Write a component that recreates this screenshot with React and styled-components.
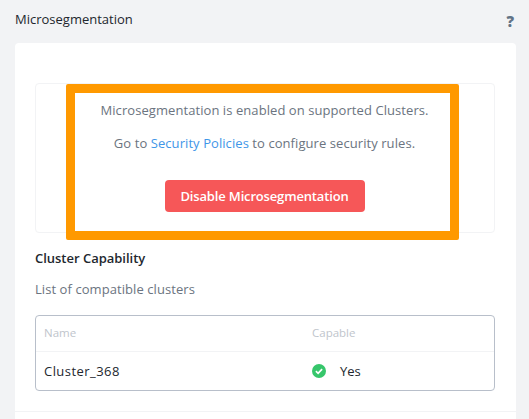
import React from "react"
import styled, { createGlobalStyle } from "styled-components"

const GlobalStyle = createGlobalStyle`
  html, body {
    margin: 0;
    padding: 0;
    background: #f2f3f5;
    font-family: "Open Sans", "Liberation Sans", sans-serif;
    overflow: hidden;
  }
`;

function CheckIcon() {
  return (
    <svg width="14" height="14" viewBox="0 0 14 14">
      <circle cx="7" cy="7" r="7" fill="#36c66b" />
      <path d="M3.9 7.2 L6.1 9.3 L10.1 5.1" fill="none" stroke="#fff" strokeWidth="1.7" />
    </svg>
  );
}

function App() {
  return (
    <Page>
      <GlobalStyle />
      <TopBar>
        <Title>Microsegmentation</Title>
        <Help>?</Help>
      </TopBar>

      <Card>
        <StatusBox>
          <StatusText>Microsegmentation is enabled on supported Clusters.</StatusText>
          <StatusText>
            Go to <SecurityLink href="#">Security Policies</SecurityLink> to configure security rules.
          </StatusText>
          <DangerButton>Disable Microsegmentation</DangerButton>
          <Highlight />
        </StatusBox>

        <SectionTitle>Cluster Capability</SectionTitle>
        <SectionHint>List of compatible clusters</SectionHint>

        <Table>
          <HeadRow>
            <span>Name</span>
            <span>Capable</span>
          </HeadRow>
          <BodyRow>
            <ClusterName>Cluster_368</ClusterName>
            <CapableCell>
              <CheckIcon />
              <span>Yes</span>
            </CapableCell>
          </BodyRow>
        </Table>

        <Divider />
      </Card>
    </Page>
  );
}

export default App;

const Page = styled.div`
  width: 529px;
  height: 419px;
  overflow: hidden;
  display: flex;
  flex-direction: column;
  padding: 0 13px 0 15px;
  box-sizing: border-box;
`;

const TopBar = styled.div`
  height: 43px;
  display: flex;
  justify-content: space-between;
  flex-shrink: 0;
`;

const Title = styled.div`
  margin-top: 10px;
  font-size: 13px;
  line-height: 18px;
  color: #22272e;
`;

const Help = styled.div`
  margin: 12px 2px 0 0;
  font-size: 15px;
  line-height: 18px;
  font-weight: 800;
  color: #627386;
`;

const Card = styled.div`
  flex: 1;
  background: #fff;
  border-radius: 4px 4px 0 0;
  padding: 40px 21px 0 20px;
`;

const StatusBox = styled.div`
  position: relative;
  height: 150px;
  box-sizing: border-box;
  border: 1px solid #f2f3f5;
  border-radius: 4px;
  display: flex;
  flex-direction: column;
  align-items: center;
  padding: 17px 1px 0 0;
`;

const StatusText = styled.p`
  margin: 0 0 15px;
  font-size: 13px;
  line-height: 18px;
  letter-spacing: 0.07px;
  color: #6b7480;
`;

const SecurityLink = styled.a`
  color: #3f96e8;
  text-decoration: none;
`;

const DangerButton = styled.button`
  margin-top: 13px;
  width: 200px;
  height: 32px;
  border: none;
  border-radius: 4px;
  background: #f65758;
  color: #fff;
  font-family: inherit;
  font-size: 13px;
  font-weight: 600;
  letter-spacing: -0.16px;
`;

const Highlight = styled.div`
  position: absolute;
  left: 30px;
  top: 0;
  width: 393px;
  height: 156px;
  box-sizing: border-box;
  border: 9px solid #ff9900;
  border-radius: 2px;
`;

const SectionTitle = styled.div`
  margin-top: 16px;
  font-size: 13px;
  line-height: 18px;
  font-weight: 600;
  letter-spacing: -0.02px;
  color: #22272e;
`;

const SectionHint = styled.div`
  margin-top: 13px;
  font-size: 13px;
  line-height: 18px;
  letter-spacing: 0.07px;
  color: #6b7480;
`;

const Table = styled.div`
  margin-top: 17px;
  box-sizing: border-box;
  height: 76px;
  border: 1px solid #b8bfca;
  border-radius: 4px;
`;

const HeadRow = styled.div`
  height: 36px;
  box-sizing: border-box;
  display: grid;
  grid-template-columns: 268px 1fr;
  align-items: center;
  padding: 0 8px 2px;
  border-bottom: 1px solid #f2f3f5;
  font-size: 11.5px;
  color: #c0c5cc;
`;

const BodyRow = styled.div`
  height: 38px;
  display: grid;
  grid-template-columns: 268px 1fr;
  align-items: center;
  padding: 0 8px;
  font-size: 13px;
  color: #22272e;
`;

const ClusterName = styled.span`
  letter-spacing: 0.45px;
`;

const CapableCell = styled.div`
  display: flex;
  align-items: center;
  gap: 14px;
`;

const Divider = styled.div`
  height: 1px;
  margin: 20px -21px 0 -20px;
  background: #f2f3f5;
`;
